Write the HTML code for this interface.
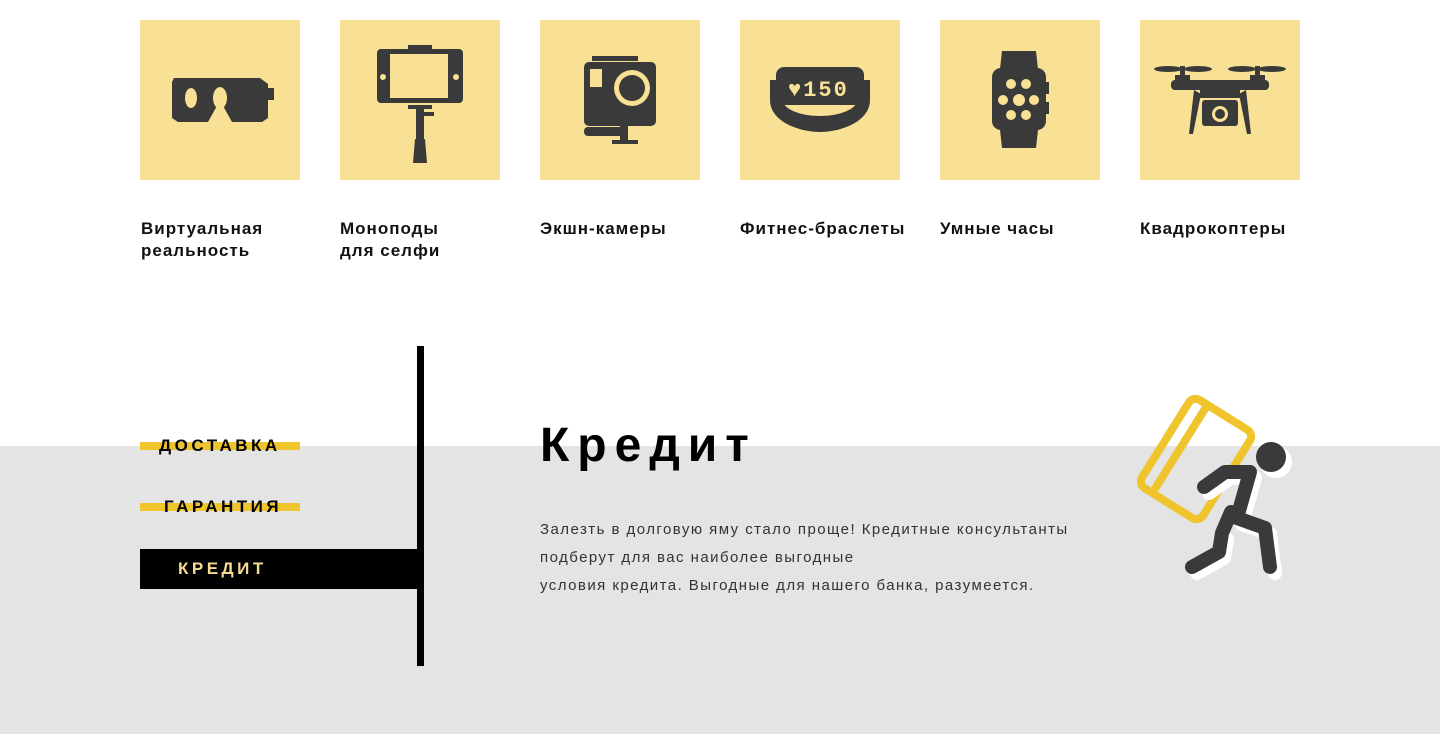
<!DOCTYPE html>
<html><head><meta charset="utf-8"><style>
body{margin:0;width:1440px;height:734px;position:relative;overflow:hidden;background:#fff;font-family:"Liberation Sans",sans-serif}
.gray{position:absolute;left:0;top:446px;width:1440px;height:288px;background:#e4e4e4}
.tile{position:absolute;top:20px;width:160px;height:160px;background:#f8e194}
.tile svg{position:absolute;left:0;top:0}
.lab{position:absolute;top:218px;font-weight:bold;font-size:17px;line-height:22px;color:#111;letter-spacing:1px}
.vl{position:absolute;left:417px;top:346px;width:7px;height:320px;background:#000}
.nav{position:absolute;left:140px;width:160px;font-weight:bold;font-size:17px;letter-spacing:3.5px;color:#000}
.bar{position:absolute;left:140px;width:160px;height:8px;background:#f0c42c}
h1{position:absolute;left:540px;top:418px;margin:0;font-size:48px;letter-spacing:8px;font-weight:bold;color:#000;font-family:"Liberation Sans",sans-serif}
p{position:absolute;left:540px;top:516px;margin:0;font-size:15px;line-height:28px;letter-spacing:1.45px;color:#333;width:580px}
</style></head><body>
<div class="gray"></div>
<div class="tile" style="left:140px"><svg width="160" height="160"><path d="M34 58h86l8 6v4h6v12h-6v18l-6 4H92l-10-18h-4l-10 18H38l-6-4V62z" fill="#3a3a3a"/><ellipse cx="51" cy="78" rx="6" ry="10" fill="#f8e194"/><ellipse cx="80" cy="78" rx="7" ry="11" fill="#f8e194"/></svg></div>
<div class="tile" style="left:340px"><svg width="160" height="160"><rect x="68" y="25" width="24" height="4" fill="#3a3a3a"/><rect x="37" y="29" width="86" height="54" rx="4" fill="#3a3a3a"/><rect x="50" y="34" width="58" height="44" fill="#f8e194"/><circle cx="43" cy="57" r="3" fill="#f8e194"/><circle cx="116" cy="57" r="3" fill="#f8e194"/><rect x="68" y="85" width="24" height="4" fill="#3a3a3a"/><rect x="76" y="89" width="8" height="30" fill="#3a3a3a"/><rect x="84" y="92" width="10" height="4" fill="#3a3a3a"/><path d="M75 119h10l2 24H73z" fill="#3a3a3a"/></svg></div>
<div class="tile" style="left:540px"><svg width="160" height="160"><rect x="52" y="36" width="46" height="5" fill="#3a3a3a"/><rect x="44" y="42" width="72" height="64" rx="5" fill="#3a3a3a"/><rect x="50" y="49" width="12" height="18" fill="#f8e194"/><circle cx="92" cy="68" r="18" fill="#f8e194"/><circle cx="92" cy="68" r="13" fill="#3a3a3a"/><rect x="44" y="107" width="40" height="9" rx="4" fill="#3a3a3a"/><rect x="80" y="106" width="8" height="18" fill="#3a3a3a"/><rect x="72" y="120" width="26" height="4" fill="#3a3a3a"/></svg></div>
<div class="tile" style="left:740px"><svg width="160" height="160"><path d="M30 60v20c0 22 30 32 50 32s50-10 50-32V60h-12v18c0 12-20 18-38 18S42 90 42 78V60z" fill="#3a3a3a"/><rect x="36" y="47" width="88" height="38" rx="8" fill="#3a3a3a"/><text x="48" y="76" font-family="Liberation Mono" font-size="22" font-weight="bold" fill="#f8e194" letter-spacing="2">♥150</text></svg></div>
<div class="tile" style="left:940px"><svg width="160" height="160"><path d="M62 31h34l2 18H60z M60 110h38l-2 18H62z" fill="#3a3a3a"/><rect x="52" y="48" width="54" height="62" rx="9" fill="#3a3a3a"/><rect x="104" y="62" width="5" height="12" fill="#3a3a3a"/><rect x="104" y="82" width="5" height="12" fill="#3a3a3a"/><g fill="#f8e194"><circle cx="71" cy="64" r="5"/><circle cx="86" cy="64" r="5"/><circle cx="63" cy="80" r="5"/><circle cx="79" cy="80" r="6"/><circle cx="94" cy="80" r="5"/><circle cx="71" cy="95" r="5"/><circle cx="86" cy="95" r="5"/></g></svg></div>
<div class="tile" style="left:1140px"><svg width="160" height="160"><g fill="#3a3a3a"><ellipse cx="28" cy="49" rx="14" ry="3"/><ellipse cx="58" cy="49" rx="14" ry="3"/><ellipse cx="102" cy="49" rx="14" ry="3"/><ellipse cx="132" cy="49" rx="14" ry="3"/><rect x="40" y="46" width="5" height="14"/><rect x="115" y="46" width="5" height="14"/><rect x="35" y="55" width="15" height="6"/><rect x="110" y="55" width="15" height="6"/><rect x="31" y="60" width="98" height="10" rx="4"/><rect x="60" y="70" width="40" height="8"/><path d="M54 70l-5 44h4l8-40zM106 70l5 44h-4l-8-40z"/><rect x="62" y="80" width="36" height="26" rx="3"/></g><circle cx="80" cy="94" r="8" fill="#f8e194"/><circle cx="80" cy="94" r="5" fill="#3a3a3a"/></svg></div>
<div class="lab" style="left:141px">Виртуальная<br>реальность</div>
<div class="lab" style="left:340px">Моноподы<br>для селфи</div>
<div class="lab" style="left:540px">Экшн-камеры</div>
<div class="lab" style="left:740px">Фитнес-браслеты</div>
<div class="lab" style="left:940px">Умные часы</div>
<div class="lab" style="left:1140px">Квадрокоптеры</div>
<div class="vl"></div>
<div class="bar" style="top:442px"></div>
<div class="nav" style="top:436px;left:159px">ДОСТАВКА</div>
<div class="bar" style="top:503px"></div>
<div class="nav" style="top:497px;left:164px">ГАРАНТИЯ</div>
<div style="position:absolute;left:140px;top:549px;width:280px;height:40px;background:#000"></div>
<div class="nav" style="top:559px;left:178px;color:#f4dc8f">КРЕДИТ</div>
<h1>Кредит</h1>
<p>Залезть в долговую яму стало проще! Кредитные консультанты подберут для вас наиболее выгодные<br>условия кредита. Выгодные для нашего банка, разумеется.</p>
<svg style="position:absolute;left:0;top:0" width="1440" height="734">
<g transform="translate(1196,459) rotate(32)">
<rect x="-36" y="-52" width="72" height="104" rx="8" fill="none" stroke="#f0c42c" stroke-width="8"/>
<line x1="-19" y1="-52" x2="-19" y2="52" stroke="#f0c42c" stroke-width="8"/>
</g>
<g fill="none" stroke="#fff" stroke-width="14" stroke-linecap="round" stroke-linejoin="round" transform="translate(5,6)">
<path d="M1204 487l21-15h25l-13 46 28 10 5 39"/><path d="M1222 533l-3 19-27 15"/>
</g>
<circle cx="1276" cy="462" r="16" fill="#fff"/>
<circle cx="1271" cy="457" r="15" fill="#3a3a3a"/>
<g fill="none" stroke="#3a3a3a" stroke-width="14" stroke-linecap="round" stroke-linejoin="round">
<path d="M1204 487l21-15h25l-13 46 28 10 5 39"/><path d="M1231 512l-9 21-3 19-27 15"/>
</g>
</svg>
</body></html>
